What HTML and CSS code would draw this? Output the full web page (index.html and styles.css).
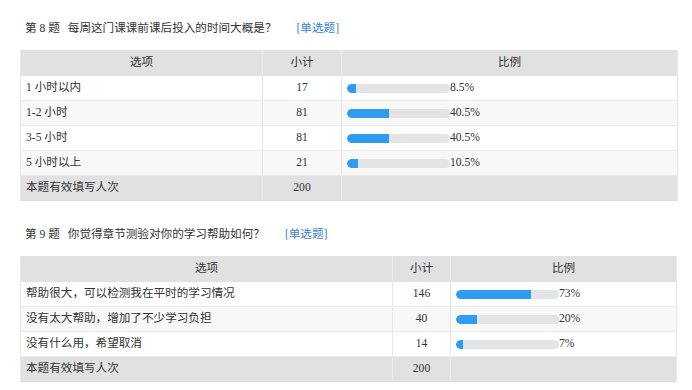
FILE: index.html
```html
<!DOCTYPE html>
<html lang="zh-CN">
<head>
<meta charset="utf-8">
<link rel="stylesheet" href="styles.css">
</head>
<body>
<div class="page">
  <section class="question">
    <div class="q-title"><span class="q-no">第 8 题</span><span class="q-text">每周这门课课前课后投入的时间大概是？</span><span class="q-type">[单选题]</span></div>
    <table class="stats t1">
      <colgroup><col class="c-opt"><col class="c-cnt"><col class="c-pct"></colgroup>
      <thead><tr><th>选项</th><th>小计</th><th>比例</th></tr></thead>
      <tbody>
        <tr><td class="opt">1 小时以内</td><td class="cnt">17</td><td class="pct"><span class="bar"><span class="fill" style="width:8.5%"></span></span><span class="val">8.5%</span></td></tr>
        <tr class="alt"><td class="opt">1-2 小时</td><td class="cnt">81</td><td class="pct"><span class="bar"><span class="fill" style="width:40.5%"></span></span><span class="val">40.5%</span></td></tr>
        <tr><td class="opt">3-5 小时</td><td class="cnt">81</td><td class="pct"><span class="bar"><span class="fill" style="width:40.5%"></span></span><span class="val">40.5%</span></td></tr>
        <tr class="alt"><td class="opt">5 小时以上</td><td class="cnt">21</td><td class="pct"><span class="bar"><span class="fill" style="width:10.5%"></span></span><span class="val">10.5%</span></td></tr>
      </tbody>
      <tfoot><tr><td class="opt">本题有效填写人次</td><td class="cnt">200</td><td></td></tr></tfoot>
    </table>
  </section>
  <section class="question">
    <div class="q-title"><span class="q-no">第 9 题</span><span class="q-text">你觉得章节测验对你的学习帮助如何？</span><span class="q-type">[单选题]</span></div>
    <table class="stats t2">
      <colgroup><col class="c-opt"><col class="c-cnt"><col class="c-pct"></colgroup>
      <thead><tr><th>选项</th><th>小计</th><th>比例</th></tr></thead>
      <tbody>
        <tr><td class="opt">帮助很大，可以检测我在平时的学习情况</td><td class="cnt">146</td><td class="pct"><span class="bar"><span class="fill" style="width:73%"></span></span><span class="val">73%</span></td></tr>
        <tr class="alt"><td class="opt">没有太大帮助，增加了不少学习负担</td><td class="cnt">40</td><td class="pct"><span class="bar"><span class="fill" style="width:20%"></span></span><span class="val">20%</span></td></tr>
        <tr><td class="opt">没有什么用，希望取消</td><td class="cnt">14</td><td class="pct"><span class="bar"><span class="fill" style="width:7%"></span></span><span class="val">7%</span></td></tr>
      </tbody>
      <tfoot><tr><td class="opt">本题有效填写人次</td><td class="cnt">200</td><td></td></tr></tfoot>
    </table>
  </section>
</div>
</body>
</html>
```

FILE: styles.css
```css
html, body {
  margin: 0;
  padding: 0;
  background: #ffffff;
}
body {
  font-family: "Liberation Serif", "Noto Sans CJK SC", serif;
  font-size: 11.6px;
  color: #333333;
}
.page {
  padding: 19px 14px 0 20px;
}
.question {
  margin-bottom: 24px;
}
.q-title {
  height: 20px;
  line-height: 20px;
  padding-left: 5px;
  margin-bottom: 11px;
  white-space: nowrap;
}
.q-no {
  margin-right: 8px;
}
.q-type {
  color: #3a7fd9;
  margin-left: 20px;
}
.stats {
  border-collapse: collapse;
  table-layout: fixed;
  border: 1px solid #e3e3e3;
}
.t1 { width: 658px; }
.t1 .c-opt { width: 242px; }
.t1 .c-cnt { width: 79px; }
.t2 { width: 657px; }
.t2 .c-opt { width: 372px; }
.t2 .c-cnt { width: 58px; }
.stats tr {
  height: 25px;
}
.stats th,
.stats td {
  padding: 0;
  border: 1px solid #e6e6e6;
  line-height: 16px;
  vertical-align: middle;
  white-space: nowrap;
}
.stats th {
  background: #e1e1e1;
  font-weight: normal;
  text-align: center;
  border-color: #e1e1e1 #ececec;
  border-style: solid;
}
.stats tbody tr {
  background: #ffffff;
}
.stats tbody tr.alt {
  background: #f8f8f8;
}
.stats tbody td {
  border-top: 1px solid #ebebeb;
  border-bottom: 1px solid #ebebeb;
}
.stats tfoot td {
  background: #e1e1e1;
  border-color: #dddddd #ececec;
}
.opt {
  padding-left: 5px !important;
  text-align: left;
}
.cnt {
  text-align: center;
}
.pct {
  padding-left: 5px !important;
}
.pct .bar,
.pct .val {
  display: inline-block;
  vertical-align: middle;
}
.bar {
  width: 103px;
  height: 9px;
  border-radius: 5px;
  background: #e3e4e6;
  overflow: hidden;
}
.fill {
  display: block;
  height: 100%;
  background: #2d9cf2;
  border-radius: 5px 0 0 5px;
}
```
